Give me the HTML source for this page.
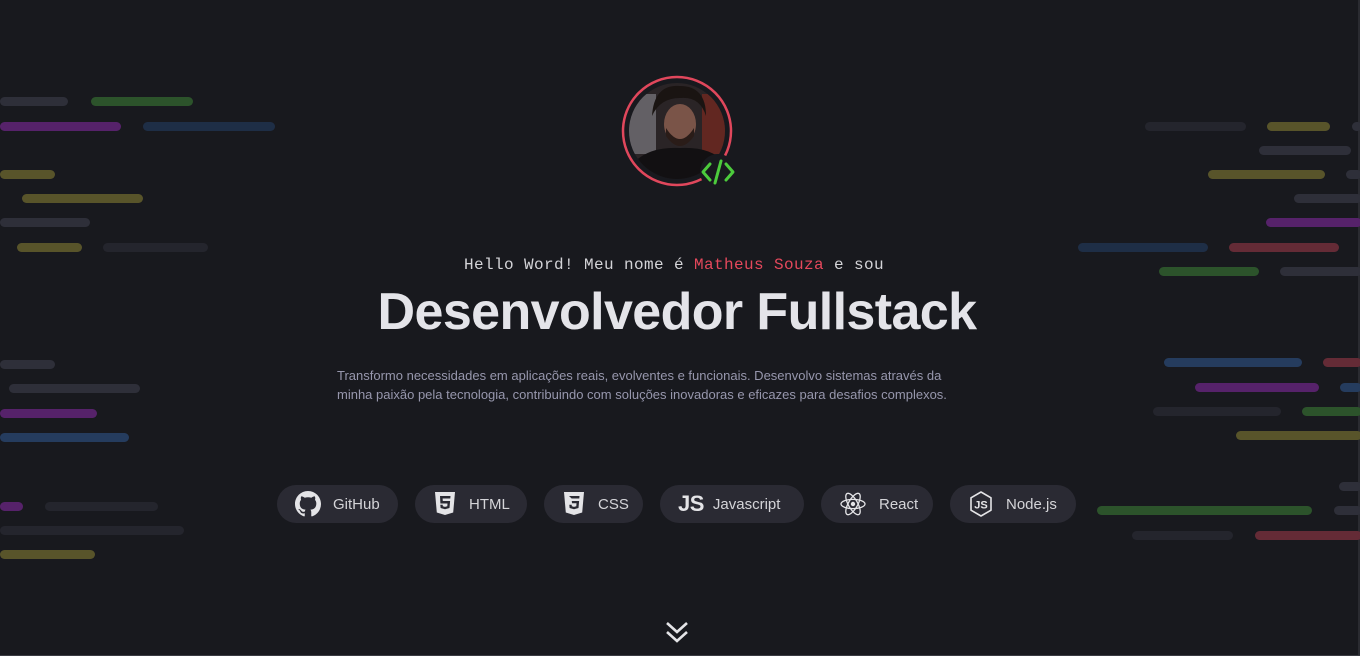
<!DOCTYPE html>
<html><head><meta charset="utf-8"><style>
*{margin:0;padding:0;box-sizing:border-box}
html,body{width:1360px;height:656px;overflow:hidden;background:#18191e;font-family:"Liberation Sans",sans-serif}
.b{position:absolute;height:9px;border-radius:5px}
.g{background:#2e2f39}.gd{background:#24252d}.gr{background:#2c532b}.p{background:#56226a}.bl{background:#253c5e}.bd{background:#1e2e46}.y{background:#58542a}.r{background:#642b36}
.hello{position:absolute;top:256px;left:-6px;width:1360px;text-align:center;font-family:"Liberation Mono",monospace;font-size:16px;letter-spacing:0.4px;color:#d4d4d8}
h1{position:absolute;top:282px;left:-3px;width:1360px;text-align:center;font-size:52px;font-weight:bold;color:#e4e4e9;letter-spacing:-0.6px}
.desc{position:absolute;top:366px;left:337px;width:636px;font-size:13px;line-height:19px;color:#9797ad}
.btn{position:absolute;top:485px;height:38px;border-radius:19px;background:#2a2a33;color:#d4d4d8;font-size:15px;display:flex;align-items:center;padding-left:18px;gap:12px}
.btn svg{flex:none}
</style></head><body>
<div style="position:absolute;right:0;top:0;width:2px;height:656px;background:#2a2b31"></div>
<div style="position:absolute;left:0;bottom:0;width:1360px;height:1px;background:#3a3b42"></div>
<div class="b g" style="left:0;width:68px;top:97px"></div><div class="b gr" style="left:91px;width:102px;top:97px"></div>
<div class="b p" style="left:0;width:121px;top:122px"></div><div class="b bd" style="left:143px;width:132px;top:122px"></div>
<div class="b y" style="left:0;width:55px;top:170px"></div>
<div class="b y" style="left:22px;width:121px;top:194px"></div>
<div class="b g" style="left:0;width:90px;top:218px"></div>
<div class="b y" style="left:17px;width:65px;top:243px"></div><div class="b gd" style="left:103px;width:105px;top:243px"></div>
<div class="b g" style="left:0;width:55px;top:360px"></div>
<div class="b g" style="left:9px;width:131px;top:384px"></div>
<div class="b p" style="left:0;width:97px;top:409px"></div>
<div class="b bl" style="left:0;width:129px;top:433px"></div>
<div class="b p" style="left:0;width:23px;top:502px"></div><div class="b gd" style="left:45px;width:113px;top:502px"></div>
<div class="b gd" style="left:0;width:184px;top:526px"></div>
<div class="b y" style="left:0;width:95px;top:550px"></div>
<div class="b gd" style="left:1145px;width:101px;top:122px"></div><div class="b y" style="left:1267px;width:63px;top:122px"></div><div class="b g" style="left:1352px;width:10px;top:122px"></div>
<div class="b g" style="left:1259px;width:92px;top:146px"></div>
<div class="b y" style="left:1208px;width:117px;top:170px"></div><div class="b g" style="left:1346px;width:16px;top:170px"></div>
<div class="b g" style="left:1294px;width:68px;top:194px"></div>
<div class="b p" style="left:1266px;width:96px;top:218px"></div>
<div class="b bd" style="left:1078px;width:130px;top:243px"></div><div class="b r" style="left:1229px;width:110px;top:243px"></div>
<div class="b gr" style="left:1159px;width:100px;top:267px"></div><div class="b g" style="left:1280px;width:82px;top:267px"></div>
<div class="b bl" style="left:1164px;width:138px;top:358px"></div><div class="b r" style="left:1323px;width:39px;top:358px"></div>
<div class="b p" style="left:1195px;width:124px;top:383px"></div><div class="b bl" style="left:1340px;width:22px;top:383px"></div>
<div class="b gd" style="left:1153px;width:128px;top:407px"></div><div class="b gr" style="left:1302px;width:60px;top:407px"></div>
<div class="b y" style="left:1236px;width:126px;top:431px"></div>
<div class="b g" style="left:1339px;width:23px;top:482px"></div>
<div class="b gr" style="left:1097px;width:215px;top:506px"></div><div class="b g" style="left:1334px;width:28px;top:506px"></div>
<div class="b gd" style="left:1132px;width:101px;top:531px"></div><div class="b r" style="left:1255px;width:107px;top:531px"></div>
<svg style="position:absolute;left:620px;top:74px" width="124" height="116" viewBox="0 0 124 116">
<defs><clipPath id="c"><circle cx="57" cy="57" r="48"/></clipPath></defs>
<circle cx="57" cy="57" r="54" fill="none" stroke="#e0475c" stroke-width="2.5"/>
<g clip-path="url(#c)">
<rect x="0" y="0" width="120" height="120" fill="#2a2426"/>
<rect x="6" y="20" width="30" height="60" fill="#8a8890" opacity="0.6"/>
<rect x="82" y="20" width="30" height="60" fill="#7a2a20" opacity="0.7"/>
<ellipse cx="60" cy="50" rx="16" ry="20" fill="#7a5448"/>
<path d="M32 42 Q34 10 60 12 Q86 12 86 42 Q80 22 60 24 Q40 24 32 42Z" fill="#1a1412"/>
<path d="M46 54 Q60 76 74 54 L74 62 Q60 82 46 62Z" fill="#2a1c18"/>
<path d="M6 100 Q20 72 60 74 Q100 72 112 100 L112 120 L6 120Z" fill="#121012"/>
</g>
<circle cx="98" cy="98" r="18" fill="#18191e"/>
<path d="M90 90 L83 98 L90 106 M106 90 L113 98 L106 106 M101 87 L95 109" fill="none" stroke="#4ccb3c" stroke-width="3" stroke-linecap="round" stroke-linejoin="round"/>
</svg>
<div class="hello">Hello Word! Meu nome é <span style="color:#e5485c">Matheus Souza</span> e sou</div>
<h1>Desenvolvedor Fullstack</h1>
<div class="desc">Transformo necessidades em aplicações reais, evolventes e funcionais. Desenvolvo sistemas através da minha paixão pela tecnologia, contribuindo com soluções inovadoras e eficazes para desafios complexos.</div>
<div class="btn" style="left:277px;width:121px"><svg width="26" height="26" viewBox="0 0 16 16"><path fill="#e4e4e7" d="M8 0C3.58 0 0 3.58 0 8c0 3.54 2.290 6.53 5.47 7.59.4.07.55-.17.55-.38 0-.19-.01-.82-.01-1.490-2.01.37-2.53-.49-2.69-.94-.09-.23-.48-.94-.82-1.130-.28-.15-.68-.52-.01-.53.63-.01 1.08.58 1.23.82.72 1.21 1.870.87 2.33.66.07-.52.28-.87.51-1.07-1.78-.2-3.64-.89-3.64-3.95 0-.87.31-1.59.82-2.15-.08-.2-.36-1.020.08-2.12 0 0 .67-.21 2.2.82.64-.18 1.32-.27 2-.27.68 0 1.36.09 2 .27 1.53-1.04 2.2-.82 2.2-.82.44 1.1.16 1.92.08 2.12.51.56.82 1.27.82 2.15 0 3.07-1.87 3.75-3.65 3.95.29.25.54.73.54 1.48 0 1.070-.01 1.93-.01 2.2 0 .21.15.46.55.38A8.01 8.01 0 0016 8c0-4.42-3.58-8-8-8z"/></svg>GitHub</div>
<div class="btn" style="left:415px;width:112px"><svg width="24" height="26" viewBox="0 0 24 26"><path fill="#e4e4e7" d="M2 1h20l-1.8 20.5L12 24l-8.2-2.5z"/><path fill="#2a2a33" d="M7 5h10.5l-.2 2.5H9.6l.2 2.5h7.3l-.6 7L12 18.3 7.6 17l-.3-3.3h2.4l.1 1.5 2.2.7 2.3-.7.2-2.7H7.4z"/></svg>HTML</div>
<div class="btn" style="left:544px;width:99px"><svg width="24" height="26" viewBox="0 0 24 26"><path fill="#e4e4e7" d="M2 1h20l-1.8 20.5L12 24l-8.2-2.5z"/><path fill="#2a2a33" d="M7 5h10.5l-.2 2.5H9.8l-.2-.0zM9.8 10h7.3l-.6 7L12 18.3 7.6 17l-.3-3.3h2.4l.1 1.5 2.2.7 2.3-.7.2-3H10z"/></svg>CSS</div>
<div class="btn" style="left:660px;width:144px;gap:9px"><span style="font-weight:bold;font-size:22px;color:#e4e4e7;letter-spacing:-0.5px">JS</span>Javascript</div>
<div class="btn" style="left:821px;width:112px"><svg width="28" height="26" viewBox="-14 -13 28 26"><g fill="none" stroke="#e4e4e7" stroke-width="1.3"><ellipse rx="12" ry="4.6"/><ellipse rx="12" ry="4.6" transform="rotate(60)"/><ellipse rx="12" ry="4.6" transform="rotate(120)"/></g><circle r="2.2" fill="#e4e4e7"/></svg>React</div>
<div class="btn" style="left:950px;width:126px"><svg width="26" height="28" viewBox="0 0 26 28"><path d="M13 2l10 5.8v12.4L13 26 3 20.2V7.8z" fill="none" stroke="#e4e4e7" stroke-width="1.6" stroke-linejoin="round"/><text x="13" y="18.5" text-anchor="middle" font-family="Liberation Sans" font-size="11" font-weight="bold" fill="#e4e4e7">JS</text></svg>Node.js</div>
<svg style="position:absolute;left:664px;top:620px" width="26" height="26" viewBox="0 0 26 26"><path d="M3 3l10 9 10-9M3 12l10 9 10-9" fill="none" stroke="#e4e4e7" stroke-width="2.6"/></svg>
</body></html>
